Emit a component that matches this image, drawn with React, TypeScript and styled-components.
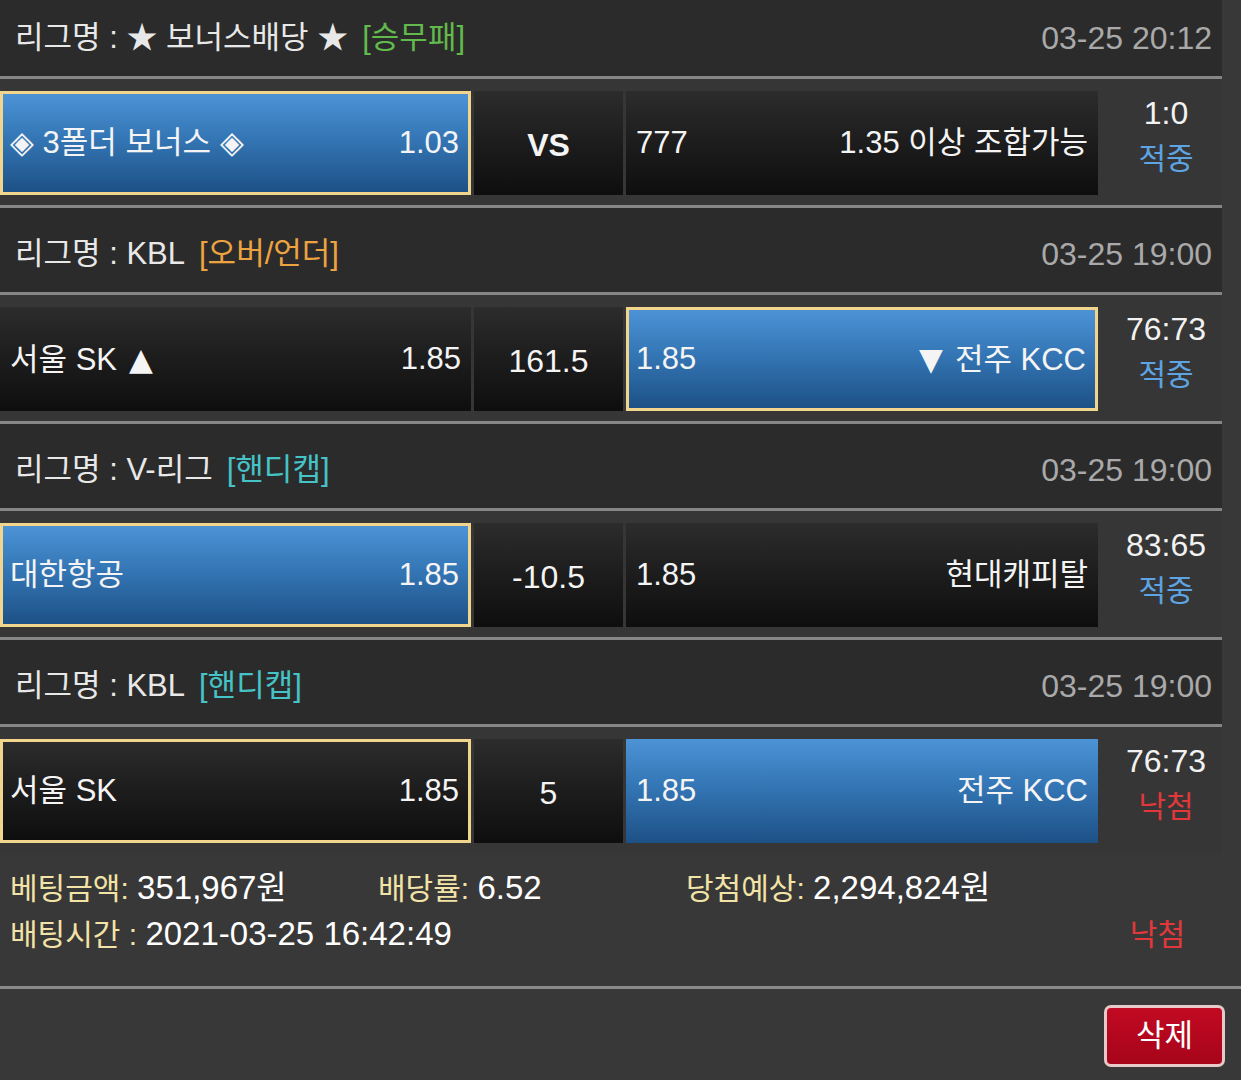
import styled, { createGlobalStyle, css } from 'styled-components';

type Tone = 'green' | 'orange' | 'cyan';
type Result = 'hit' | 'miss';

interface Game {
  league: string;
  tag: string;
  tone: Tone;
  date: string;
  home: string;
  homeMark?: string;
  homeOdds: string;
  middle: string;
  bold?: boolean;
  awayOdds: string;
  away: string;
  awayMark?: string;
  pick: 'home' | 'away';
  framed: 'home' | 'away';
  score: string;
  result: Result;
}

const games: Game[] = [
  {
    league: '리그명 : ★ 보너스배당 ★',
    tag: '[승무패]',
    tone: 'green',
    date: '03-25 20:12',
    home: '◈ 3폴더 보너스 ◈',
    homeOdds: '1.03',
    middle: 'VS',
    bold: true,
    awayOdds: '777',
    away: '1.35 이상 조합가능',
    pick: 'home',
    framed: 'home',
    score: '1:0',
    result: 'hit',
  },
  {
    league: '리그명 : KBL',
    tag: '[오버/언더]',
    tone: 'orange',
    date: '03-25 19:00',
    home: '서울 SK',
    homeMark: '▲',
    homeOdds: '1.85',
    middle: '161.5',
    awayOdds: '1.85',
    away: '전주 KCC',
    awayMark: '▼',
    pick: 'away',
    framed: 'away',
    score: '76:73',
    result: 'hit',
  },
  {
    league: '리그명 : V-리그',
    tag: '[핸디캡]',
    tone: 'cyan',
    date: '03-25 19:00',
    home: '대한항공',
    homeOdds: '1.85',
    middle: '-10.5',
    awayOdds: '1.85',
    away: '현대캐피탈',
    pick: 'home',
    framed: 'home',
    score: '83:65',
    result: 'hit',
  },
  {
    league: '리그명 : KBL',
    tag: '[핸디캡]',
    tone: 'cyan',
    date: '03-25 19:00',
    home: '서울 SK',
    homeOdds: '1.85',
    middle: '5',
    awayOdds: '1.85',
    away: '전주 KCC',
    pick: 'away',
    framed: 'home',
    score: '76:73',
    result: 'miss',
  },
];

const toneColors: Record<Tone, string> = {
  green: '#62b94c',
  orange: '#eda341',
  cyan: '#45c3c6',
};

const GlobalStyle = createGlobalStyle`
  body {
    margin: 0;
    background: #383838;
    color: #ffffff;
    font-family: "Liberation Sans", "Noto Sans CJK KR", sans-serif;
  }
`;

const Page = styled.div`
  width: 1241px;
  overflow: hidden;
`;

const List = styled.div`
  width: 1222px;
  margin-top: -8px;
`;

const Header = styled.div`
  display: flex;
  justify-content: space-between;
  align-items: center;
  box-sizing: border-box;
  height: 87px;
  padding: 8px 10px 0 15px;
  background: #2b2b2b;
  border-bottom: 3px solid #868686;
  font-size: 31px;
  line-height: 40px;
`;

const League = styled.span`
  color: #e8e8e8;
`;

const Tag = styled.span<{ $tone: Tone }>`
  margin-left: 14px;
  color: ${(p) => toneColors[p.$tone]};
`;

const DateText = styled.span`
  color: #a9a9a9;
  font-size: 32px;
`;

const Row = styled.div<{ $last?: boolean }>`
  display: grid;
  grid-template-columns: 471px 149px 472px 1fr;
  column-gap: 3px;
  box-sizing: border-box;
  height: ${(p) => (p.$last ? '126px' : '129px')};
  padding: 12px 0 10px;
  background: #363636;
  border-bottom: ${(p) => (p.$last ? 'none' : '3px solid #868686')};
`;

const darkFill = css`
  background: linear-gradient(to bottom, #2c2c2c 0%, #1b1b1b 55%, #0e0e0e 100%);
`;

const blueFill = css`
  background: linear-gradient(to bottom, #4c93d6 0%, #3476b5 45%, #1d5186 100%);
`;

const Cell = styled.div<{ $active?: boolean; $framed?: boolean }>`
  display: flex;
  justify-content: space-between;
  align-items: center;
  box-sizing: border-box;
  height: 104px;
  font-size: 31px;
  line-height: 40px;
  color: #f4f4f4;
  ${(p) => (p.$active ? blueFill : darkFill)};
  border: ${(p) => (p.$framed ? '3px solid #f1d58d' : 'none')};
  padding-left: ${(p) => (p.$framed ? '7px' : '10px')};
  padding-right: ${(p) => (p.$framed ? '9px' : '10px')};
`;

const Arrow = styled.span<{ $side: 'before' | 'after' }>`
  font-family: "DejaVu Sans", sans-serif;
  font-size: 31px;
  ${(p) => (p.$side === 'after' ? 'margin-left: 12px;' : 'margin-right: 12px;')}
`;

const Middle = styled.div<{ $bold?: boolean }>`
  display: flex;
  justify-content: center;
  align-items: center;
  height: 104px;
  padding-top: 4px;
  box-sizing: border-box;
  ${darkFill};
  font-size: 32px;
  line-height: 40px;
  font-weight: ${(p) => (p.$bold ? 700 : 400)};
  color: #f4f4f4;
`;

const ScoreBox = styled.div`
  display: flex;
  flex-direction: column;
  align-items: center;
  margin-top: -1px;
  padding-left: 9px;
  line-height: 46px;
`;

const Score = styled.span`
  font-size: 32px;
  color: #f2f2f2;
`;

const Outcome = styled.span<{ $result: Result }>`
  font-size: 30px;
  color: ${(p) => (p.$result === 'hit' ? '#5ea3e2' : '#e2383b')};
`;

const Summary = styled.div`
  padding: 12px 10px 29px;
  border-bottom: 3px solid #8a8a8a;
  font-size: 30px;
  line-height: 45px;
`;

const SummaryLine = styled.div<{ $cols: string }>`
  display: grid;
  grid-template-columns: ${(p) => p.$cols};
  align-items: center;
`;

const Label = styled.span`
  color: #f3e3a6;
`;

const Value = styled.span`
  color: #ffffff;
  font-size: 33px;
`;

const MissMark = styled.span`
  color: #e2383b;
  padding-right: 46px;
`;

const Actions = styled.div`
  display: flex;
  justify-content: flex-end;
  padding: 16px 16px 0 0;
`;

const DeleteButton = styled.button`
  width: 121px;
  height: 62px;
  border: 3px solid #e7c9c9;
  border-radius: 7px;
  background: linear-gradient(to bottom, #c20a22, #a6041a);
  color: #ffffff;
  font-family: inherit;
  font-size: 31px;
  line-height: 40px;
  cursor: pointer;
`;

const GameBlock = ({ game, last }: { game: Game; last: boolean }) => (
  <>
    <Header>
      <span>
        <League>{game.league}</League>
        <Tag $tone={game.tone}>{game.tag}</Tag>
      </span>
      <DateText>{game.date}</DateText>
    </Header>
    <Row $last={last}>
      <Cell $active={game.pick === 'home'} $framed={game.framed === 'home'}>
        <span>
          {game.home}
          {game.homeMark && <Arrow $side="after">{game.homeMark}</Arrow>}
        </span>
        <span>{game.homeOdds}</span>
      </Cell>
      <Middle $bold={game.bold}>{game.middle}</Middle>
      <Cell $active={game.pick === 'away'} $framed={game.framed === 'away'}>
        <span>{game.awayOdds}</span>
        <span>
          {game.awayMark && <Arrow $side="before">{game.awayMark}</Arrow>}
          {game.away}
        </span>
      </Cell>
      <ScoreBox>
        <Score>{game.score}</Score>
        <Outcome $result={game.result}>{game.result === 'hit' ? '적중' : '낙첨'}</Outcome>
      </ScoreBox>
    </Row>
  </>
);

const App = () => {
  return (
    <Page>
      <GlobalStyle />
      <List>
        {games.map((g, i) => (
          <GameBlock key={i} game={g} last={i === games.length - 1} />
        ))}
      </List>
      <Summary>
        <SummaryLine $cols="368px 308px 1fr">
          <span>
            <Label>베팅금액: </Label>
            <Value>351,967원</Value>
          </span>
          <span>
            <Label>배당률: </Label>
            <Value>6.52</Value>
          </span>
          <span>
            <Label>당첨예상: </Label>
            <Value>2,294,824원</Value>
          </span>
        </SummaryLine>
        <SummaryLine $cols="1fr auto">
          <span>
            <Label>배팅시간 : </Label>
            <Value>2021-03-25 16:42:49</Value>
          </span>
          <MissMark>낙첨</MissMark>
        </SummaryLine>
      </Summary>
      <Actions>
        <DeleteButton>삭제</DeleteButton>
      </Actions>
    </Page>
  );
};

export default App;
